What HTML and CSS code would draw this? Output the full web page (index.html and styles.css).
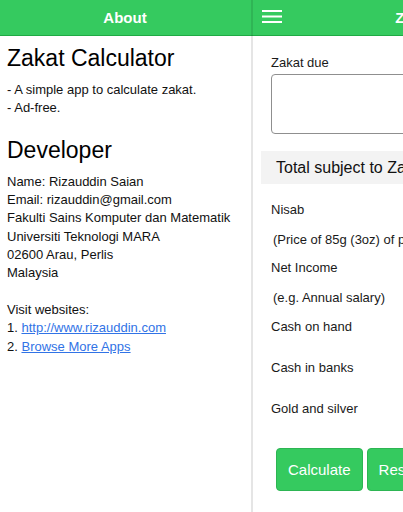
FILE: index.html
```
<!DOCTYPE html>
<html lang="en">
<head>
<meta charset="utf-8">
<title>Zakat Calculator</title>
<link rel="stylesheet" href="styles.css">
</head>
<body>
<div class="app">
  <aside class="side">
    <header class="bar">
      <div class="bar-title side-title">About</div>
    </header>
    <div class="side-content">
      <h1 class="heading">Zakat Calculator</h1>
      <p class="text">- A simple app to calculate zakat.<br>- Ad-free.</p>
      <h2 class="heading heading-dev">Developer</h2>
      <p class="text">Name: Rizauddin Saian<br>Email: rizauddin@gmail.com<br>Fakulti Sains Komputer dan Matematik<br>Universiti Teknologi MARA<br>02600 Arau, Perlis<br>Malaysia<br><br>Visit websites:<br>1. <a class="link" href="#">http://www.rizauddin.com</a><br>2. <a class="link" href="#">Browse More Apps</a></p>
    </div>
  </aside>

  <main class="main">
    <header class="bar main-bar">
      <span class="menu-icon">
        <svg width="20" height="14" viewBox="0 0 20 14">
          <rect x="0" y="0" width="20" height="2" fill="#fff"/>
          <rect x="0" y="5.5" width="20" height="2" fill="#fff"/>
          <rect x="0" y="11" width="20" height="2" fill="#fff"/>
        </svg>
      </span>
      <div class="bar-title main-title">Zakat Calculator</div>
    </header>
    <div class="main-content">
      <div class="field">Zakat due</div>
      <textarea class="due" readonly></textarea>
      <div class="divider">Total subject to Zakat</div>
      <div class="form">
        <div class="field f-nisab">Nisab</div>
        <div class="field hint f-price">(Price of 85g (3oz) of pure gold)</div>
        <div class="field f-net">Net Income</div>
        <div class="field hint f-salary">(e.g. Annual salary)</div>
        <div class="field f-cash">Cash on hand</div>
        <div class="field f-cash">Cash in banks</div>
        <div class="field f-gold">Gold and silver</div>
      </div>
      <div class="buttons">
        <button class="btn" type="button">Calculate</button>
        <button class="btn" type="button">Reset</button>
      </div>
    </div>
  </main>
</div>
</body>
</html>
```
FILE: styles.css
```
html, body {
  margin: 0;
  padding: 0;
  background: #fff;
}
body {
  font-family: "Liberation Sans", Arial, Helvetica, sans-serif;
  color: #111;
  width: 403px;
  height: 512px;
  overflow: hidden;
}
.app {
  position: relative;
  width: 403px;
  height: 512px;
  overflow: hidden;
}
.bar {
  height: 35px;
  background: #35ca5f;
  border-bottom: 1px solid #1faa44;
  display: flex;
  align-items: center;
  position: relative;
}
.bar-title {
  color: #fff;
  font-weight: bold;
  font-size: 15px;
  white-space: nowrap;
}
.side {
  width: 253px;
  height: 512px;
}
.side-title {
  flex: 1;
  text-align: center;
  padding-right: 3px;
}
.side-content {
  padding: 9px 7px 0 7px;
}
.heading {
  font-size: 23px;
  line-height: 26px;
  font-weight: normal;
  margin: 0 0 10px 0;
  color: #000;
  white-space: nowrap;
}
.heading-dev {
  margin-top: 19px;
}
.text {
  margin: 0;
  font-size: 13px;
  line-height: 18.33px;
  color: #111;
  white-space: nowrap;
}
.link {
  color: #3173e6;
  text-decoration: underline;
}
.main {
  position: absolute;
  left: 253px;
  top: 0;
  width: 403px;
  height: 512px;
  background: #fff;
  box-shadow: -2px 0 0 rgba(0, 0, 0, 0.1);
}
.main-bar {
  justify-content: center;
}
.menu-icon {
  position: absolute;
  left: 9px;
  top: 10px;
  display: block;
  line-height: 0;
}
.main-title {
  padding-right: 2px;
}
.main-content {
  padding: 18px 0 0 8px;
  font-size: 13px;
  color: #1a1a1a;
}
.field {
  line-height: 18.33px;
  margin-left: 10px;
  white-space: nowrap;
}
.due {
  display: block;
  margin: 2px 0 0 10px;
  width: 380px;
  height: 60px;
  box-sizing: border-box;
  border: 1px solid #8f8f8f;
  border-radius: 4px;
  resize: none;
  background: #fff;
  padding: 0;
}
.divider {
  margin-top: 17px;
  height: 33px;
  line-height: 33px;
  background: #f3f3f3;
  padding-left: 15px;
  font-size: 16px;
  color: #111;
  white-space: nowrap;
}
.form {
  padding-top: 17px;
}
.hint {
  padding-left: 2px;
}
.f-nisab { margin-bottom: 11.67px; }
.f-price { margin-bottom: 9.33px; }
.f-net { margin-bottom: 11.67px; }
.f-salary { margin-bottom: 10.67px; }
.f-cash { margin-bottom: 22.67px; }
.f-gold { margin-bottom: 29.67px; }
.buttons {
  display: flex;
  gap: 4px;
  margin-left: 15px;
}
.btn {
  height: 43px;
  padding: 0 11px;
  background: #35ca5f;
  border: 1px solid #2db553;
  border-radius: 4px;
  color: #fff;
  font-family: "Liberation Sans", Arial, Helvetica, sans-serif;
  font-size: 15px;
  white-space: nowrap;
}
```
